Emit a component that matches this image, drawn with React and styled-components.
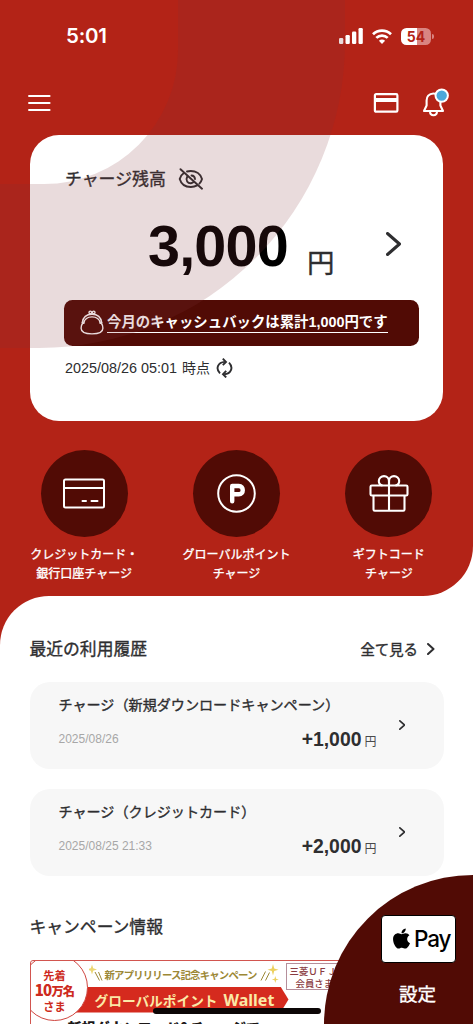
import React from 'react';
import styled, { createGlobalStyle, css } from 'styled-components';
import { FaApple } from 'react-icons/fa';

const red = '#b32317';
const maroon = '#510b05';
const ink = '#2e2e30';

/* The Japanese face has no medium weight: thicken the regular one slightly. */
const medium = css`
  font-weight: 400;
  -webkit-text-stroke: ${(p) => p.$stroke || 0.35}px currentColor;
`;

const GlobalStyle = createGlobalStyle`
  * { box-sizing: border-box; }
  html, body { margin: 0; padding: 0; background: #fff; }
  body {
    width: 473px;
    height: 1024px;
    overflow: hidden;
    font-family: "Liberation Sans", "Noto Sans CJK JP", sans-serif;
    color: ${ink};
  }
  svg { display: block; flex: none; }
`;

const Screen = styled.div`
  position: relative;
  width: 473px;
  height: 1024px;
  overflow: hidden;
  background: #fff;
`;

const Hero = styled.section`
  position: relative;
  height: 596px;
  background: ${red};
  border-bottom-right-radius: 50px;
`;

const Ring = styled.svg`
  position: absolute;
  left: 0;
  top: 0;
  pointer-events: none;
`;

const StatusBar = styled.div`
  display: flex;
  align-items: center;
  height: 72px;
  padding: 0 39px 0 66px;
  color: #fff;
`;

const Clock = styled.span`
  flex: 1;
  font: 600 20.5px/24px Inter, sans-serif;
  letter-spacing: -0.2px;
`;

const StatusIcons = styled.div`
  display: flex;
  align-items: center;
  gap: 9px;
`;

const Battery = styled.div`
  display: flex;
  align-items: center;
  gap: 1px;
`;

const BatteryBody = styled.div`
  width: 30px;
  height: 17px;
  border-radius: 5.5px;
  background: linear-gradient(90deg, #fff 55%, #d98581 55%);
  color: ${red};
  font: 700 14px/17px Inter, sans-serif;
  text-align: center;
`;

const BatteryTip = styled.div`
  width: 2px;
  height: 5px;
  border-radius: 0 2px 2px 0;
  background: #d98581;
`;

const Toolbar = styled.nav`
  display: flex;
  align-items: center;
  height: 63px;
  padding: 0 23px 2px 28px;
`;

const ToolbarActions = styled.div`
  display: flex;
  align-items: center;
  gap: 23px;
  margin-left: auto;
`;

const BalanceCard = styled.div`
  width: 413px;
  height: 286px;
  margin-left: 30px;
  padding: 31px 24px 0 34px;
  border-radius: 29px;
  background: #fff;
`;

const BalanceHeading = styled.div`
  display: flex;
  align-items: center;
  gap: 12.5px;
  height: 26px;
  padding-left: 1px;
  font-size: 16.9px;
  ${medium}
`;

const HeadingText = styled.span`
  margin-top: -3px;
`;

const AmountRow = styled.div`
  display: flex;
  align-items: flex-start;
  height: 107.5px;
  padding-left: 84px;
`;

const Amount = styled.span`
  width: 159px;
  padding-top: 21px;
  font-size: 57.5px;
  line-height: 66px;
  font-weight: 700;
  letter-spacing: -0.8px;
  color: #000;
`;

const AmountUnit = styled.span`
  width: 79px;
  padding-top: 51px;
  font-size: 27.5px;
  line-height: 42px;
  ${medium}
`;

const ChevronSlot = styled.span`
  padding-top: 39.5px;
`;

const Cashback = styled.a`
  display: flex;
  align-items: center;
  gap: 3px;
  height: 46px;
  padding-left: 16px;
  border-radius: 8.5px;
  background: ${maroon};
  color: #fff;
`;

const CashbackText = styled.span`
  height: 21.5px;
  border-bottom: 1px solid #fff;
  font-size: 14.4px;
  line-height: 21px;
  font-weight: 700;
  white-space: nowrap;
`;

const Timestamp = styled.div`
  display: flex;
  align-items: center;
  height: 45px;
  padding-left: 1px;
  font-size: 14.4px;
`;

const TimestampSuffix = styled.span`
  margin: -2px 6px 0 5px;
  font-size: 14px;
`;

const QuickActions = styled.div`
  display: flex;
  padding: 29px 8px 0 8px;
`;

const QuickAction = styled.div`
  flex: 1;
  display: flex;
  flex-direction: column;
  align-items: center;
  color: #fff;
`;

const ActionDisc = styled.div`
  display: flex;
  align-items: center;
  justify-content: center;
  width: 87px;
  height: 87px;
  border-radius: 50%;
  background: ${maroon};
`;

const ActionLabel = styled.span`
  margin-top: 9px;
  font-size: 12px;
  line-height: 18.5px;
  text-align: center;
  white-space: pre;
  ${medium}
`;

const SheetBackdrop = styled.div`
  height: 428px;
  background: linear-gradient(90deg, ${red} 60px, #fff 60px);
`;

const Sheet = styled.main`
  height: 428px;
  padding: 39px 29.5px 0 29.5px;
  border-top-left-radius: 49px;
  background: #fff;
`;

const SectionHeader = styled.div`
  display: flex;
  align-items: center;
  justify-content: space-between;
  height: 28px;
  padding-right: 9px;
`;

const SectionTitle = styled.h2`
  margin: 0;
  font-size: 16.8px;
  line-height: 29px;
  ${medium}
`;

const SeeAll = styled.a`
  display: flex;
  align-items: center;
  gap: 9px;
  font-size: 14.4px;
  margin-top: -1px;
  ${medium}
`;

const History = styled.div`
  display: flex;
  flex-direction: column;
  gap: 19.5px;
  margin: 18.5px 0 37px;
`;

const HistoryItem = styled.div`
  display: flex;
  align-items: center;
  height: 87.5px;
  padding: 0 38px 0 29px;
  border-radius: 20px;
  background: #f7f7f7;
`;

const HistoryBody = styled.div`
  width: 318px;
  margin-right: 22px;
`;

const HistoryTitle = styled.div`
  height: 24px;
  font-size: 14.1px;
  line-height: 24px;
  white-space: nowrap;
  ${medium}
`;

const HistoryDetail = styled.div`
  display: flex;
  align-items: center;
  justify-content: space-between;
  height: 24px;
  margin: 10px 0 7px;
`;

const HistoryDate = styled.span`
  font-size: 12px;
  color: #a7a7a7;
`;

const HistoryAmount = styled.span`
  display: flex;
  align-items: baseline;
  gap: 3px;
  margin-top: 1px;
  font-size: 19.4px;
  font-weight: 700;
`;

const Yen = styled.span`
  font-size: 12px;
  font-weight: 400;
  color: #4a4a4c;
`;

const CampaignBanner = styled.div`
  position: relative;
  height: 70px;
  margin-top: 17.5px;
  padding-left: 37px;
  border: 1px solid #d2554f;
  border-radius: 3px;
  overflow: hidden;
  background: #fff;
`;

const CampaignTop = styled.div`
  display: flex;
  height: 26px;
  padding-left: 21px;
`;

const CampaignLead = styled.div`
  display: flex;
  align-items: center;
  width: 197px;
  color: #9c8836;
  font: 700 10.4px/16px "Noto Sans CJK JP", sans-serif;
  white-space: nowrap;
`;

const LeadText = styled.span`
  width: 153px;
  margin: 3px 2px 0 -3px;
  letter-spacing: -0.82px;
`;

const MemberBox = styled.div`
  width: 90px;
  height: 27px;
  margin-top: 2px;
  padding: 1px 0 0 3px;
  border: 1px solid #b58f9b;
  color: #8a3c42;
  font: 500 9.4px/12px "Noto Sans CJK JP", sans-serif;
  white-space: nowrap;
`;

const MemberLine = styled.div`
  padding-left: ${(p) => p.$indent || 0}px;
`;

const Ribbon = styled.div`
  display: flex;
  align-items: center;
  gap: 6px;
  width: 221px;
  height: 26px;
  padding-left: 27px;
  background: #d52a1e;
  clip-path: polygon(0 0, 213px 0, 100% 50%, 213px 100%, 0 100%);
  color: #fbe9a7;
  font: 700 13.7px/26px "Noto Sans CJK JP", sans-serif;
  white-space: nowrap;
`;

const RibbonLatin = styled.span`
  font: 700 16px/26px "Noto Sans", sans-serif;
`;

const CampaignHeadline = styled.div`
  margin-top: 2px;
  font: 900 14px/24px "Noto Sans CJK JP", sans-serif;
  color: #1b1717;
  white-space: nowrap;
`;

const FirstBadge = styled.div`
  position: absolute;
  left: -10px;
  top: -7px;
  width: 67px;
  height: 67px;
  padding: 13px 0 0 1px;
  border: 1px solid #cf4640;
  border-radius: 50%;
  background: #fff;
  color: #cd2a20;
  font: 700 11.2px/14px "Noto Sans CJK JP", sans-serif;
  text-align: center;
  white-space: nowrap;
`;

const BadgeCount = styled.div`
  font-size: 12.2px;
  line-height: 15px;
  font-weight: 900;
  letter-spacing: -0.8px;
`;

const BadgeNumber = styled.span`
  font-size: 15px;
`;

const PayCorner = styled.div`
  position: absolute;
  right: 0;
  bottom: 0;
  display: flex;
  flex-direction: column;
  align-items: center;
  width: 149px;
  height: 149px;
  padding: 40px 0 0 40px;
  border-top-left-radius: 149px;
  background: ${maroon};
  color: #fff;
`;

const PayMark = styled.div`
  display: flex;
  align-items: center;
  gap: 1px;
  width: 75px;
  height: 48px;
  padding: 0 0 1px 8px;
  border: 1.5px solid #000;
  border-radius: 4px;
  background: #fff;
  color: #000;
  font: 500 22.5px/28px Inter, sans-serif;
  letter-spacing: -1.1px;
`;

const PayLabel = styled.span`
  margin: 18px 2px 0 0;
  font-size: 18.6px;
  line-height: 28px;
  ${medium}
`;

const HomeIndicator = styled.div`
  position: absolute;
  left: 153px;
  bottom: 10px;
  width: 168px;
  height: 6px;
  border-radius: 3px;
  background: #0c0606;
`;

const Chevron = ({ width, height, stroke }) => (
  <svg width={width} height={height} viewBox={`0 0 ${width} ${height}`} fill="none" stroke={ink} strokeWidth={stroke} strokeLinecap="round" strokeLinejoin="round">
    <path d={`M${stroke / 2} ${stroke / 2}L${width - stroke / 2} ${height / 2}L${stroke / 2} ${height - stroke / 2}`} />
  </svg>
);

const SignalIcon = () => (
  <svg width="24" height="16" viewBox="0 0 24 16" fill="#fff">
    <rect x="0" y="10" width="4.3" height="6" rx="1.2" />
    <rect x="6.5" y="7" width="4.3" height="9" rx="1.2" />
    <rect x="13" y="3.5" width="4.3" height="12.5" rx="1.2" />
    <rect x="19.5" y="0" width="4.3" height="16" rx="1.2" />
  </svg>
);

const WifiIcon = () => (
  <svg width="20" height="15" viewBox="0 0 20 15" fill="none" stroke="#fff" strokeWidth="2.7">
    <path d="M1 5.2C6 .3 14 .3 19 5.2" />
    <path d="M4.3 8.9C7.5 5.8 12.5 5.8 15.7 8.9" />
    <path d="M10 15L6.9 11.7C8.6 10 11.4 10 13.1 11.7Z" fill="#fff" stroke="none" />
  </svg>
);

const MenuIcon = () => (
  <svg width="23" height="18" viewBox="0 0 23 18" stroke="#fff" strokeWidth="2.2" strokeLinecap="round">
    <path d="M1.1 2H21.5M1.1 9H21.5M1.1 16H21.5" />
  </svg>
);

const WalletCardIcon = () => (
  <svg width="26" height="20" viewBox="0 0 26 20" fill="none" stroke="#fff" strokeWidth="2.2">
    <rect x="1.900" y="1.200" width="22.500" height="17.500" rx="1.200" />
    <path d="M2.400 7H24" strokeWidth="4" />
  </svg>
);

const BellIcon = () => (
  <svg width="28" height="30" viewBox="0 0 28 30" fill="none" stroke="#fff" strokeWidth="2.1" strokeLinejoin="round">
    <path d="M11.500 5.500C6.700 5.500 4.600 9 4.600 12.500V17.500L2 23H21L18.400 17.500V12.500C18.400 8.500 16.300 5.500 11.500 5.500Z" />
    <path d="M8 23.500C8.200 28.500 14.800 28.500 15 23.500" />
    <circle cx="19.700" cy="7.600" r="6.200" fill="#4aa8da" strokeWidth="2" />
  </svg>
);

const HiddenEyeIcon = () => (
  <svg width="26" height="22" viewBox="0 0 26 22" fill="none" stroke={ink} strokeWidth="1.9" strokeLinecap="round">
    <path d="M5.600 5.200C3.300 6.700 2.200 8.600 1.700 11C3.200 16.200 7.500 19 12.800 19C15 19 17.300 18.500 19.200 17.400" />
    <path d="M9 3.500C10.200 3.100 11.500 3 12.800 3C18 3 22.600 6 24 11C23.500 12.900 22.600 14.400 21.400 15.600" />
    <path d="M9.200 8.700C7.200 12.300 9.800 15.500 13 15.200C14.400 15.100 15.300 14.500 16 13.700" />
    <path d="M13.500 7.500C15.300 7.600 16.800 9 17 11" />
    <path d="M2.500 1.200L24 20.700" />
  </svg>
);

const PurseIcon = () => (
  <svg width="24" height="25" viewBox="0 0 24 25" fill="none" stroke="#fff" strokeWidth="1.400" strokeLinecap="round">
    <path d="M3.200 12C1.800 14.200 1.100 16.500 1.100 18.300C1.100 22.300 5 23.900 12 23.900S22.900 22.300 22.900 18.300C22.900 16.500 22.200 14.200 20.800 12" />
    <path d="M2.300 12.600C3 7.200 6.700 4.200 12 4.200S21 7.200 21.700 12.600" />
    <path d="M3.800 13C4.600 9 7.600 6.900 12 6.900S19.400 9 20.200 13" />
    <path d="M2.300 12.600Q2.600 13.600 3.800 13M21.700 12.600Q21.400 13.600 20.200 13" />
    <circle cx="10.300" cy="2.400" r="1.300" />
    <circle cx="13.700" cy="2.400" r="1.300" />
  </svg>
);

const RefreshIcon = () => (
  <svg width="17" height="20" viewBox="0 0 17 20" fill="none" stroke={ink} strokeWidth="1.900">
    <path d="M4 15.400C-.8 10.500 2 4.200 8.800 3.900M13 4.600C17.800 9.500 15 16 8.200 16.300" />
    <path d="M6.800 .7L10 4L6.800 7.200M10.200 12.900L7 16.200L10.200 19.400" />
  </svg>
);

const CreditIcon = () => (
  <svg width="42" height="32" viewBox="0 0 42 32" fill="none" stroke="#fff" strokeWidth="2">
    <rect x="1" y="1.500" width="40" height="28" rx="1.500" />
    <path d="M1 10H41" />
    <path d="M19.500 23H23M28.500 23H34.500" strokeLinecap="round" />
  </svg>
);

const PointIcon = () => (
  <svg width="40" height="40" viewBox="0 0 40 40" fill="none" stroke="#fff">
    <circle cx="20.500" cy="19.500" r="18.300" strokeWidth="2" />
    <path d="M16.200 27.300V12H22.800C28.100 12 28.100 20.300 22.800 20.300H16.500" strokeWidth="4.400" strokeLinecap="round" strokeLinejoin="round" />
  </svg>
);

const GiftIcon = () => (
  <svg width="40" height="38" viewBox="0 0 40 38" fill="none" stroke="#fff" strokeWidth="2.100" strokeLinejoin="round">
    <rect x="1.500" y="10.500" width="37" height="10" rx="1.300" />
    <path d="M4.500 21V34.500Q4.500 35.800 5.700 35.800H34.300Q35.500 35.800 35.500 34.500V21" />
    <path d="M20 10.500V35.800" />
    <path d="M20 10.500V6.300C20 3 17.700 1.100 15 1.100S9.800 3.200 9.800 5.900C9.800 8.300 11.200 10 13.500 10.500" />
    <path d="M20 10.500V6.300C20 3 22.300 1.100 25 1.100S30.200 3.200 30.200 5.900C30.200 8.300 28.800 10 26.500 10.500" />
  </svg>
);

const LeftSparkle = () => (
  <svg width="19" height="26" viewBox="0 0 19 26">
    <path d="M3 3.500L4.200 7.300L8 8.500L4.200 9.700L3 13.500L1.800 9.700L-2 8.500L1.800 7.300Z" fill="#ecd674" />
    <path d="M6 11L10.500 19.500M9.500 11L13 19.500" stroke="#9c8836" strokeWidth="1" />
  </svg>
);

const RightSparkle = () => (
  <svg width="20" height="26" viewBox="0 0 20 26">
    <path d="M13 3L14.200 7.400L18.500 8.700L14.200 10L13 14.500L11.800 10L7.500 8.700L11.800 7.400Z" fill="#ecd05f" />
    <path d="M15.300 15L16.100 17.700L18.800 18.500L16.100 19.300L15.300 22L14.500 19.300L11.800 18.500L14.500 17.700Z" fill="#ecd05f" />
    <path d="M5.500 10.500L1 19.500M9.500 11.500L5.500 19.500" stroke="#9c8836" strokeWidth="1" />
  </svg>
);

const actions = [
  { icon: <CreditIcon />, label: 'クレジットカード・\n銀行口座チャージ' },
  { icon: <PointIcon />, label: 'グローバルポイント\nチャージ' },
  { icon: <GiftIcon />, label: 'ギフトコード\nチャージ' },
];

const history = [
  { title: 'チャージ（新規ダウンロードキャンペーン）', date: '2025/08/26', amount: '+1,000' },
  { title: 'チャージ（クレジットカード）', date: '2025/08/25 21:33', amount: '+2,000' },
];

export default function App() {
  return (
    <>
      <GlobalStyle />
      <Screen>
        <Hero>
          <StatusBar>
            <Clock>5:01</Clock>
            <StatusIcons>
              <SignalIcon />
              <WifiIcon />
              <Battery>
                <BatteryBody>54</BatteryBody>
                <BatteryTip />
              </Battery>
            </StatusIcons>
          </StatusBar>
          <Toolbar>
            <MenuIcon />
            <ToolbarActions>
              <WalletCardIcon />
              <BellIcon />
            </ToolbarActions>
          </Toolbar>
          <BalanceCard>
            <BalanceHeading>
              <HeadingText>チャージ残高</HeadingText>
              <HiddenEyeIcon />
            </BalanceHeading>
            <AmountRow>
              <Amount>3,000</Amount>
              <AmountUnit>円</AmountUnit>
              <ChevronSlot>
                <Chevron width={15} height={24} stroke={3} />
              </ChevronSlot>
            </AmountRow>
            <Cashback>
              <PurseIcon />
              <CashbackText>今月のキャッシュバックは累計1,000円です</CashbackText>
            </Cashback>
            <Timestamp>
              2025/08/26 05:01
              <TimestampSuffix>時点</TimestampSuffix>
              <RefreshIcon />
            </Timestamp>
          </BalanceCard>
          <QuickActions>
            {actions.map((a) => (
              <QuickAction key={a.label}>
                <ActionDisc>{a.icon}</ActionDisc>
                <ActionLabel>{a.label}</ActionLabel>
              </QuickAction>
            ))}
          </QuickActions>
          <Ring width="346" height="349" viewBox="0 0 346 349">
            <path d="M178 0H345V42A306 306 0 0 1 39 348H0V184H44A134 134 0 0 0 178 50Z" fill="rgba(133,52,56,0.178)" />
          </Ring>
        </Hero>
        <SheetBackdrop>
          <Sheet>
            <SectionHeader>
              <SectionTitle>最近の利用履歴</SectionTitle>
              <SeeAll>
                全て見る
                <Chevron width={7.5} height={12} stroke={2} />
              </SeeAll>
            </SectionHeader>
            <History>
              {history.map((h) => (
                <HistoryItem key={h.title}>
                  <HistoryBody>
                    <HistoryTitle>{h.title}</HistoryTitle>
                    <HistoryDetail>
                      <HistoryDate>{h.date}</HistoryDate>
                      <HistoryAmount>
                        {h.amount}
                        <Yen>円</Yen>
                      </HistoryAmount>
                    </HistoryDetail>
                  </HistoryBody>
                  <Chevron width={6.5} height={10} stroke={1.7} />
                </HistoryItem>
              ))}
            </History>
            <SectionTitle>キャンペーン情報</SectionTitle>
            <CampaignBanner>
              <CampaignTop>
                <CampaignLead>
                  <LeftSparkle />
                  <LeadText>新アプリリリース記念キャンペーン</LeadText>
                  <RightSparkle />
                </CampaignLead>
                <MemberBox>
                  <MemberLine>三菱ＵＦＪカード</MemberLine>
                  <MemberLine $indent={6}>会員さま限定</MemberLine>
                </MemberBox>
              </CampaignTop>
              <Ribbon>
                グローバルポイント
                <RibbonLatin>Wallet</RibbonLatin>
              </Ribbon>
              <CampaignHeadline>新規ダウンロード&amp;チャージで</CampaignHeadline>
              <FirstBadge>
                先着
                <BadgeCount>
                  <BadgeNumber>10</BadgeNumber>万名
                </BadgeCount>
                さま
              </FirstBadge>
            </CampaignBanner>
          </Sheet>
        </SheetBackdrop>
        <PayCorner>
          <PayMark>
            <FaApple size={23} />
            Pay
          </PayMark>
          <PayLabel>設定</PayLabel>
        </PayCorner>
        <HomeIndicator />
      </Screen>
    </>
  );
}
